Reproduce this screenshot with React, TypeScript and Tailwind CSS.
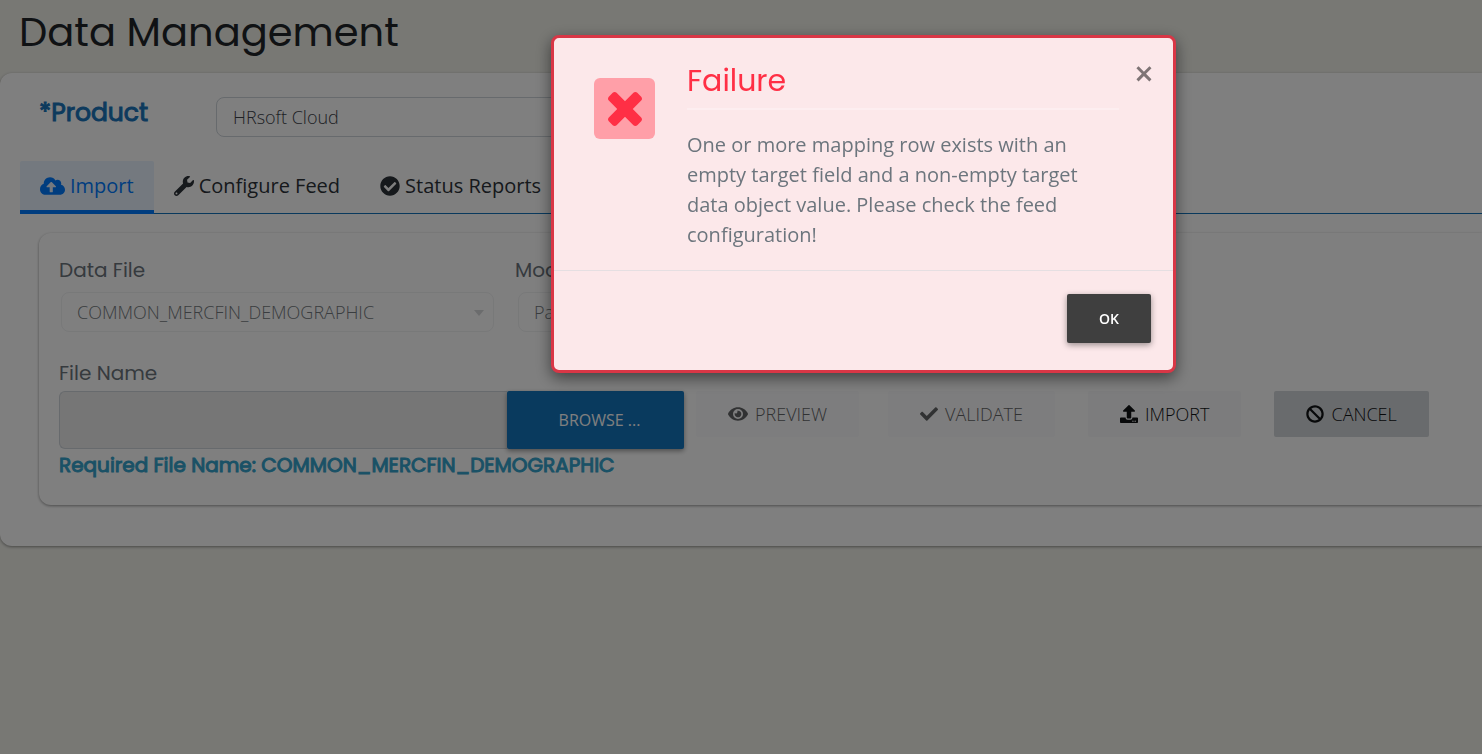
import type { ReactNode } from 'react';
import { FaBan, FaCheck, FaCheckCircle, FaCloudUploadAlt, FaEye, FaUpload, FaWrench } from 'react-icons/fa';

const heading = 'font-[Poppins,Inter,sans-serif]';

function Tab({ icon, label, active }: { icon: ReactNode; label: string; active?: boolean }) {
  return (
    <button
      type="button"
      role="tab"
      aria-selected={!!active}
      className={
        active
          ? 'flex h-[53px] items-center gap-[5px] rounded-t-xs border-b-4 border-[#007bff] bg-[#e8f2ff] px-5 text-[20px] text-[#007bff]'
          : 'flex h-[53px] items-center gap-[5px] border-b-4 border-transparent px-5 text-[20px] text-[#2d3238]'
      }
    >
      {icon}
      {label}
    </button>
  );
}

function Action({ icon, label, tone }: { icon: ReactNode; label: string; tone: 'disabled' | 'light' | 'gray' }) {
  const tones = {
    disabled: 'bg-[#fbfbfc] text-[#636567]',
    light: 'bg-[#f8f9fa] text-[#111315]',
    gray: 'bg-[#d3d6da] text-[#111315]',
  };
  return (
    <button
      type="button"
      disabled={tone === 'disabled'}
      className={`flex h-[46px] items-center gap-[7px] rounded-xs px-8 text-[18px] font-light ${tones[tone]}`}
    >
      {icon}
      {label}
    </button>
  );
}

function Picker({ id, value, className }: { id: string; value: string; className: string }) {
  return (
    <div className={`relative ${className}`}>
      <select
        id={id}
        disabled
        className="h-10 w-full appearance-none rounded-lg border border-[#f1f2f3] px-[15px] text-[18px] font-light text-[#747a80] opacity-100"
      >
        <option>{value}</option>
      </select>
      <svg className="pointer-events-none absolute top-[18px] right-[10px] h-[6px] w-[10px]" viewBox="0 0 10 6" aria-hidden="true">
        <path d="M0 0h10L5 6z" fill="#d6d8da" />
      </svg>
    </div>
  );
}

export default function App() {
  return (
    <div className="min-h-screen overflow-x-hidden bg-[#f0f0e9] font-['Open_Sans',sans-serif]">
      <header className="px-[19px] pt-2">
        <h1 className={`${heading} h-[65px] text-[40px] leading-[48px] text-[#212529]`}>Data Management</h1>
      </header>

      <main className="rounded-l-xl bg-white pb-[41px] pl-5 shadow-[0_1px_3px_rgba(0,0,0,0.4)]">
        <div className="flex items-start pt-6 pl-[19px]">
          <label
            htmlFor="product"
            className={`${heading} w-[177px] text-[25px] leading-8 text-[#1b75bb] [-webkit-text-stroke:1px_currentColor]`}
          >
            *Product
          </label>
          <select
            id="product"
            className="h-10 w-[640px] appearance-none rounded-lg border border-[#ced4da] bg-white px-4 text-[18px] font-light text-[#3c4249]"
          >
            <option>HRsoft Cloud</option>
          </select>
        </div>

        <div role="tablist" className="mt-6 flex h-[53px] border-b border-[#1272ba]">
          <Tab active icon={<FaCloudUploadAlt className="h-5 w-[25px]" />} label="Import" />
          <Tab icon={<FaWrench className="size-5" />} label="Configure Feed" />
          <Tab icon={<FaCheckCircle className="size-5" />} label="Status Reports" />
        </div>

        <section className="mt-[19px] ml-[19px] h-[272px] rounded-l-xl bg-white pt-[22px] pl-5 shadow-[0_1px_3px_rgba(0,0,0,0.4)]">
          <div className="flex">
            <div className="w-[456px]">
              <label htmlFor="data-file" className={`${heading} block h-[37px] text-[20px] leading-[30px] text-[#6c757d]`}>
                Data File
              </label>
              <Picker id="data-file" value="COMMON_MERCFIN_DEMOGRAPHIC" className="ml-0.5 w-[433px]" />
            </div>
            <div>
              <label htmlFor="mode" className={`${heading} block h-[37px] text-[20px] leading-[30px] text-[#6c757d]`}>
                Mode
              </label>
              <Picker id="mode" value="Partial" className="ml-[3px] w-[433px]" />
            </div>
          </div>

          <label htmlFor="file-name" className={`${heading} mt-[26px] block h-[33px] text-[20px] leading-[30px] text-[#6c757d]`}>
            File Name
          </label>
          <div className="flex items-start">
            <input
              id="file-name"
              type="text"
              disabled
              className="h-[58px] w-[448px] rounded-l-md border border-r-0 border-[#ced4da] bg-[#ececec] px-4 text-[18px]"
            />
            <button
              type="button"
              className="h-[58px] w-[177px] rounded-xs bg-[#1374bc] pl-2 text-[16px] text-white shadow-[0_2px_5px_rgba(0,0,0,0.4)]"
            >
              BROWSE ...
            </button>
            <div className="ml-3 flex gap-[33px]">
              <div className="flex gap-[29px]">
                <Action tone="disabled" icon={<FaEye className="h-[18px] w-5" />} label="PREVIEW" />
                <Action tone="disabled" icon={<FaCheck className="size-[18px]" />} label="VALIDATE" />
              </div>
              <Action tone="light" icon={<FaUpload className="size-[18px]" />} label="IMPORT" />
              <Action tone="gray" icon={<FaBan className="size-[18px]" />} label="CANCEL" />
            </div>
          </div>
          <p className={`${heading} text-[20px] leading-8 text-[#34a3cc] [-webkit-text-stroke:1px_currentColor]`}>
            Required File Name: COMMON_MERCFIN_DEMOGRAPHIC
          </p>
        </section>
      </main>

      <div className="fixed inset-0 flex items-start justify-center bg-black/50 pt-[35px] pl-[245px]">
        <div
          role="alertdialog"
          aria-modal="true"
          aria-labelledby="dialog-title"
          aria-describedby="dialog-text"
          className="relative w-[625px] rounded-lg border-[3px] border-[#d93646] bg-[#fce8ea] shadow-[0_5px_15px_rgba(0,0,0,0.5)]"
        >
          <div className="flex gap-8 pt-6 pr-[54px] pb-5 pl-10">
            <div className="mt-4 flex size-[61px] shrink-0 items-center justify-center rounded-md bg-[#ff9fa8]">
              <svg className="size-[34px]" viewBox="302 366 1188 1188" fill="#ff2f45" aria-hidden="true">
                <path d="M1490 1322q0 40-28 68l-136 136q-28 28-68 28t-68-28l-294-294-294 294q-28 28-68 28t-68-28l-136-136q-28-28-28-68t28-68l294-294-294-294q-28-28-28-68t28-68l136-136q28-28 68-28t68 28l294 294 294-294q28-28 68-28t68 28l136 136q28 28 28 68t-28 68l-294 294 294 294q28 28 28 68z" />
              </svg>
            </div>
            <div className="flex-1">
              <h2 id="dialog-title" className={`${heading} h-12 border-b-2 border-[#fdeef0] pt-px text-[30px] leading-9 text-[#ff2f45]`}>
                Failure
              </h2>
              <p id="dialog-text" className="mt-5 text-[20px] leading-[30px] text-[#6c757d]">
                One or more mapping row exists with an empty target field and a non-empty target data object value. Please check the feed
                configuration!
              </p>
            </div>
          </div>
          <button
            type="button"
            aria-label="Close"
            className="absolute top-5 right-3.5 flex size-[30px] items-center justify-center text-[34px] leading-[30px] font-semibold text-[#7e7475]"
          >
            ×
          </button>
          <div className="flex justify-end border-t border-[#e5dfe2] px-[22px] pt-[23px] pb-[27px]">
            <button
              type="button"
              className="h-[49px] w-[84px] rounded-xs bg-[#3f3f3f] text-[14px] font-semibold text-white shadow-[0_2px_6px_rgba(0,0,0,0.4)]"
            >
              OK
            </button>
          </div>
        </div>
      </div>
    </div>
  );
}
